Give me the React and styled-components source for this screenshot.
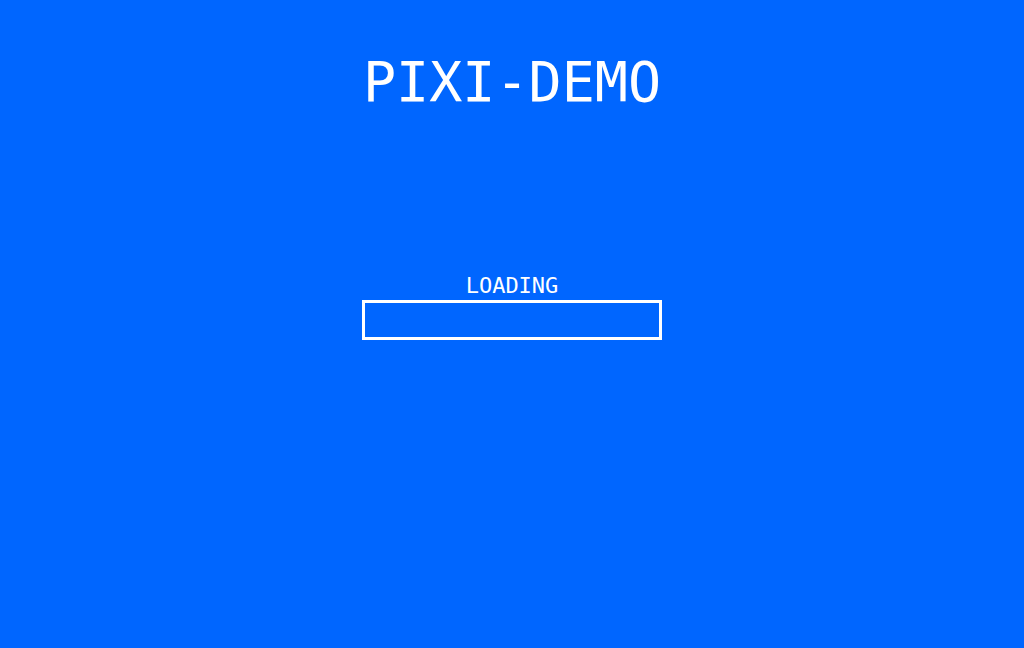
import React from "react";
import styled, { createGlobalStyle } from "styled-components";

const GlobalStyle = createGlobalStyle`
  html, body {
    margin: 0;
    padding: 0;
    background: #0066ff;
  }
`;

const App = () => {
  return (
    <>
      <GlobalStyle />
      <Screen>
        <Title>PIXI-DEMO</Title>
        <Loader>
          <LoaderLabel>LOADING</LoaderLabel>
          <ProgressBox>
            <ProgressFill style={{ width: "0%" }} />
          </ProgressBox>
        </Loader>
      </Screen>
    </>
  );
};

export default App;

const Screen = styled.div`
  display: flex;
  flex-direction: column;
  align-items: center;
  width: 100%;
  height: 648px;
  background: #0066ff;
  color: #ffffff;
  font-family: "DejaVu Sans Mono", "Liberation Mono", monospace;
`;

const Title = styled.h1`
  margin: 55px 0 0;
  font-size: 55px;
  font-weight: normal;
  line-height: 55px;
  letter-spacing: 0;
`;

const Loader = styled.div`
  display: flex;
  flex-direction: column;
  align-items: center;
  gap: 3px;
  margin-top: 165px;
`;

const LoaderLabel = styled.div`
  font-size: 22px;
  line-height: 22px;
`;

const ProgressBox = styled.div`
  box-sizing: border-box;
  width: 300px;
  height: 40px;
  border: 3px solid #ffffff;
`;

const ProgressFill = styled.div`
  height: 100%;
  background: #ffffff;
`;
